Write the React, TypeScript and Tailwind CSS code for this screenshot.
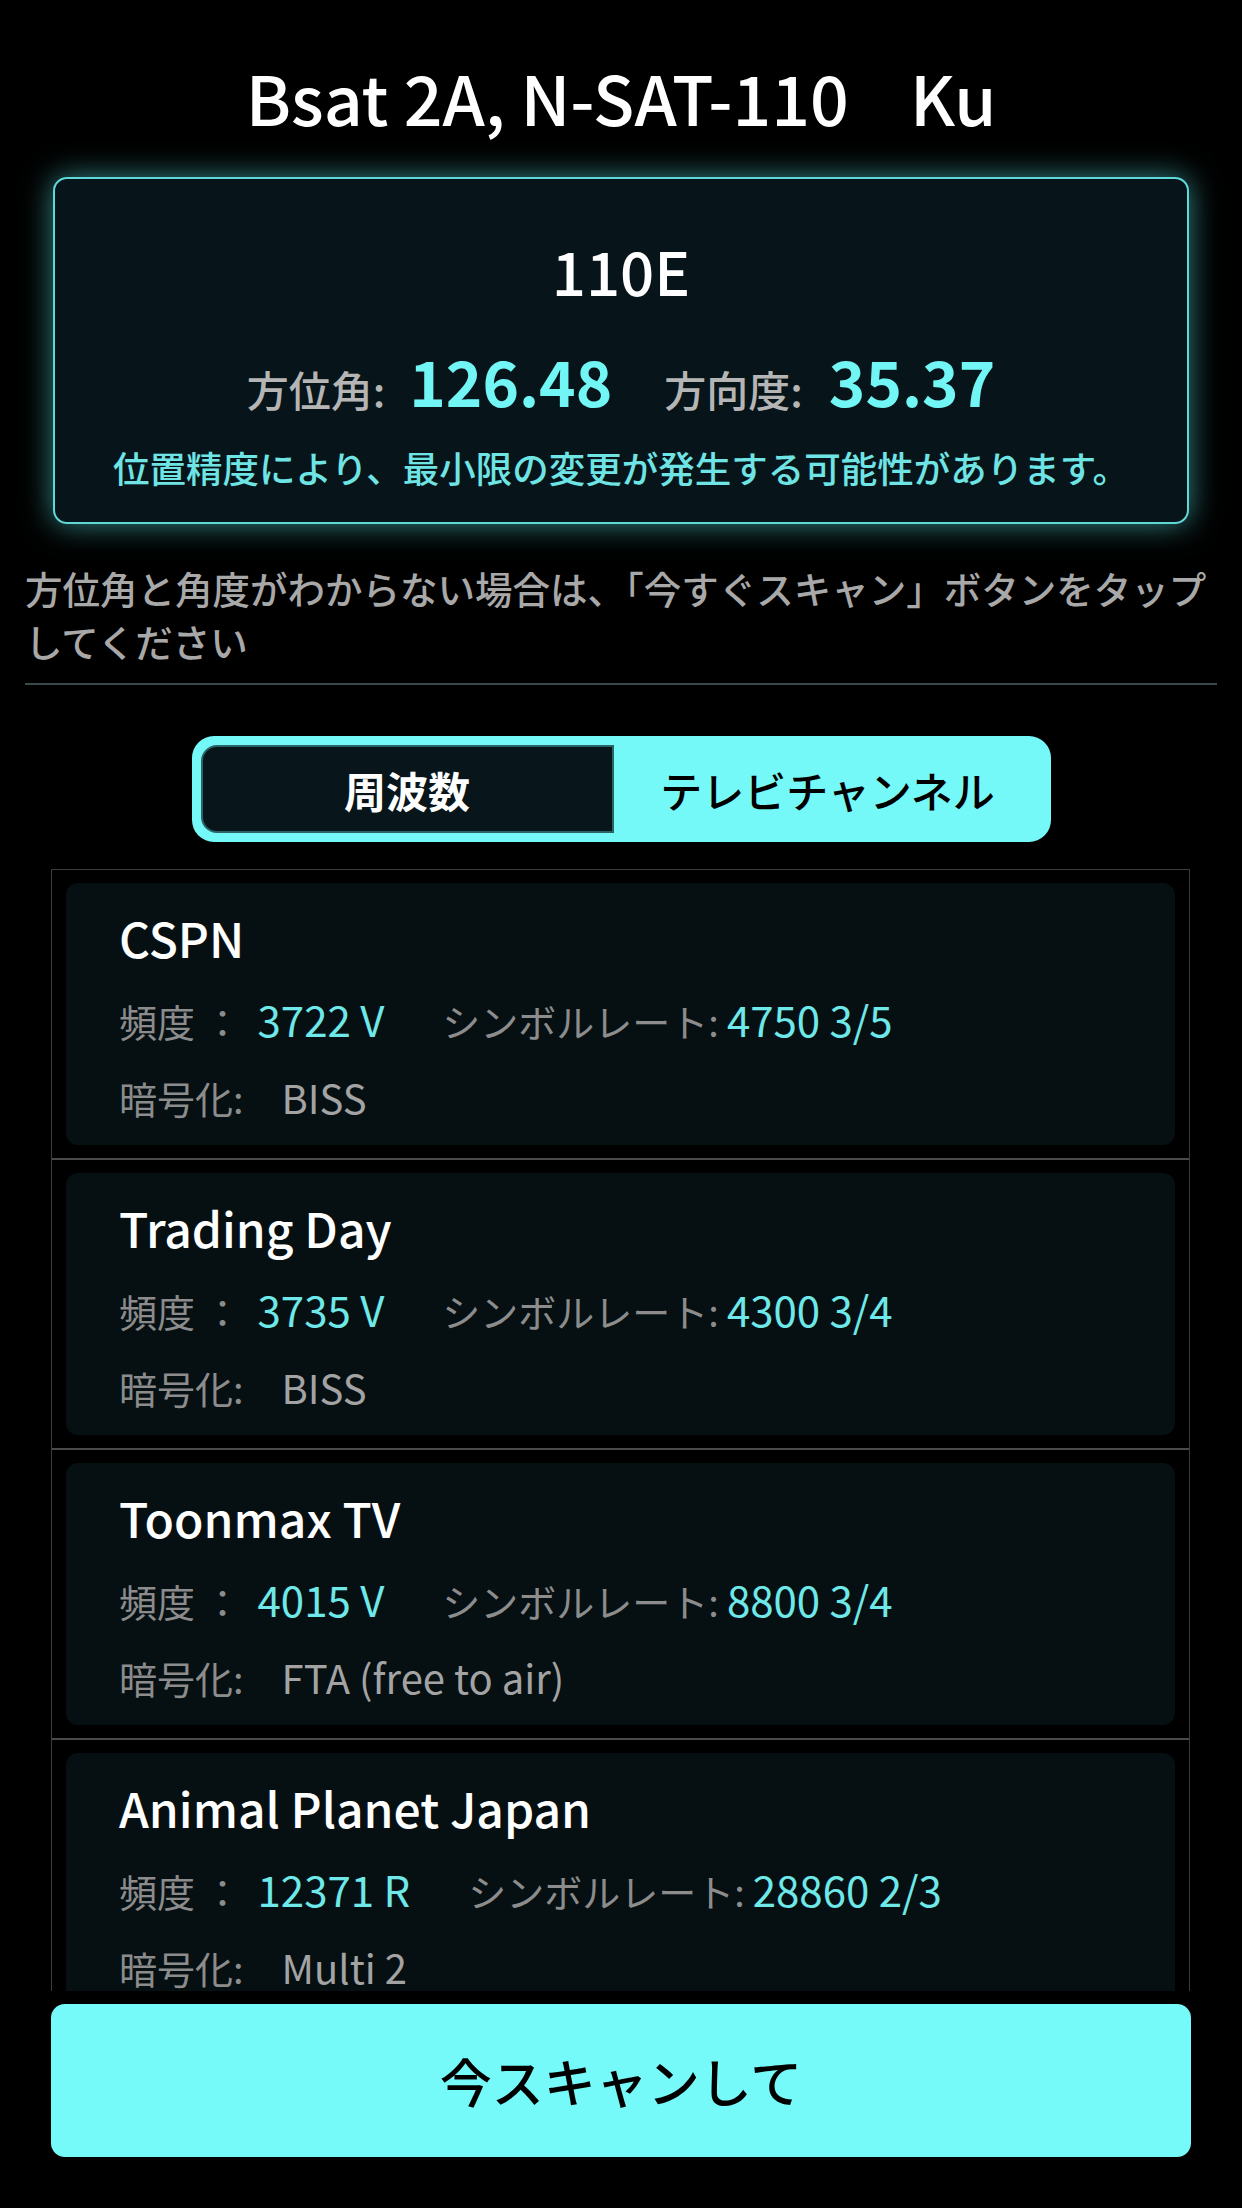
const channels = [
  { name: "CSPN", freq: "3722 V", rate: "4750 3/5", enc: "BISS" },
  { name: "Trading Day", freq: "3735 V", rate: "4300 3/4", enc: "BISS" },
  { name: "Toonmax TV", freq: "4015 V", rate: "8800 3/4", enc: "FTA (free to air)" },
  { name: "Animal Planet Japan", freq: "12371 R", rate: "28860 2/3", enc: "Multi 2" },
];

function ChannelItem({ ch }: { ch: (typeof channels)[number] }) {
  return (
    <div className="px-[14px] py-[13px] border-b-2 border-[#4a4a4a]">
      <div className="h-[262px] rounded-[12px] bg-[#061013] pl-[53px] pt-[24px]">
        <div className="text-white text-[48px] font-medium leading-[60px]">{ch.name}</div>
        <div className="mt-[24px] flex items-baseline text-[38px] leading-[56px] whitespace-pre">
          <span className="text-[#8c8c8c]">頻度 ：</span>
          <span className="ml-[16px] text-[42px] text-[#6ee8e8]">{ch.freq}</span>
          <span className="ml-[58px] text-[#8c8c8c]">シンボルレート:</span>
          <span className="ml-[8px] text-[42px] text-[#6ee8e8]">{ch.rate}</span>
        </div>
        <div className="mt-[26px] flex items-baseline text-[38px] leading-[44px]">
          <span className="text-[#8c8c8c]">暗号化:</span>
          <span className="ml-[38px] text-[40px] text-[#a3a3a3]">{ch.enc}</span>
        </div>
      </div>
    </div>
  );
}

export default function App() {
  return (
    <div className="w-[1242px] min-h-[2208px] bg-black flex flex-col font-['Noto_Sans_CJK_JP',sans-serif]">
      <div className="h-[177px] pt-[16px] flex items-center justify-center">
        <h1 className="text-white text-[68px] font-medium leading-none whitespace-pre">Bsat 2A, N-SAT-110    Ku</h1>
      </div>

      <div className="mx-[53px] h-[347px] rounded-[14px] border-2 border-[#5fd8d8] bg-[#07151a] shadow-[0_0_30px_rgba(90,225,225,0.6)] flex flex-col items-center pt-[56px]">
        <div className="text-white text-[60px] font-medium leading-[70px]">110E</div>
        <div className="mt-[35px] flex items-baseline leading-[80px]">
          <span className="text-[42px] font-medium text-[#b5b5b5]">方位角:</span>
          <span className="ml-[24px] text-[62px] font-bold text-[#72f5f5]">126.48</span>
          <span className="ml-[52px] text-[42px] font-medium text-[#b5b5b5]">方向度:</span>
          <span className="ml-[26px] text-[62px] font-bold text-[#72f5f5]">35.37</span>
        </div>
        <div className="mt-[14px] text-[36.5px] font-medium leading-[50px] text-[#6fe4e4]">
          位置精度により、最小限の変更が発生する可能性があります。
        </div>
      </div>

      <div className="px-[25px] mt-[37px]">
        <p className="text-[37.5px] font-medium leading-[53px] text-[#a8a8a8]">
          方位角と角度がわからない場合は、「今すぐスキャン」ボタンをタップしてください
        </p>
        <div className="mt-[16px] h-[2px] bg-[#3a4a4c]" />
      </div>

      <div className="mt-[51px] mx-auto w-[859px] h-[106px] rounded-[22px] bg-[#74f8f8] p-[9px] flex">
        <div className="w-[413px] rounded-l-[16px] border-2 border-[#2a6466] bg-[#08161b] flex items-center justify-center text-white text-[42px] font-bold">
          周波数
        </div>
        <div className="flex-1 flex items-center justify-center text-black text-[42px] font-medium">
          テレビチャンネル
        </div>
      </div>

      <div className="mt-[27px] ml-[51px] mr-[52px] h-[1122px] overflow-hidden border-x border-t border-[#3c3c3c]">
        {channels.map((ch) => (
          <ChannelItem key={ch.name} ch={ch} />
        ))}
      </div>

      <button className="mt-[13px] mx-[51px] h-[153px] rounded-[14px] bg-[#75faf9] text-black text-[52px] font-medium">
        今スキャンして
      </button>
    </div>
  );
}
